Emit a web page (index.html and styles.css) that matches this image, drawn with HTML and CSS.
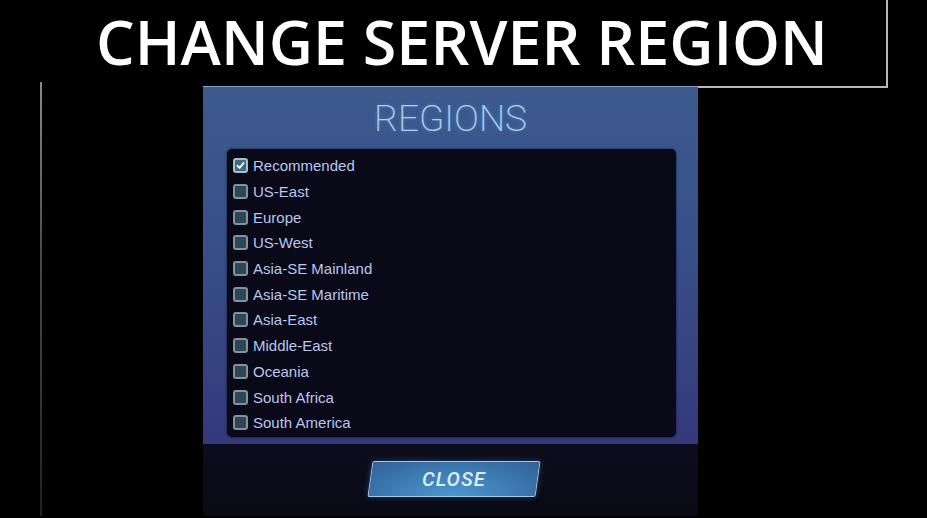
FILE: index.html
```html
<!DOCTYPE html>
<html lang="en">
<head>
  <meta charset="UTF-8">
  <meta name="viewport" content="width=device-width, initial-scale=1">
  <title>Change Server Region</title>
  <link rel="stylesheet" href="styles.css">
</head>
<body>

<div class="header">
  <h1>CHANGE SERVER REGION</h1>
</div>

<div class="stage">
  <div class="side-line"></div>

  <div class="panel">
    <h2>REGIONS</h2>

    <div class="region-list">
      <label class="region"><span class="box checked"><svg viewBox="0 0 14 14"><path d="M3.2 7.4 L5.9 10 L10.9 3.8" /></svg></span>Recommended</label>
      <label class="region"><span class="box"></span>US-East</label>
      <label class="region"><span class="box"></span>Europe</label>
      <label class="region"><span class="box"></span>US-West</label>
      <label class="region"><span class="box"></span>Asia-SE Mainland</label>
      <label class="region"><span class="box"></span>Asia-SE Maritime</label>
      <label class="region"><span class="box"></span>Asia-East</label>
      <label class="region"><span class="box"></span>Middle-East</label>
      <label class="region"><span class="box"></span>Oceania</label>
      <label class="region"><span class="box"></span>South Africa</label>
      <label class="region"><span class="box"></span>South America</label>
    </div>

    <div class="footer">
      <button class="close-btn"><span>CLOSE</span></button>
    </div>
  </div>
</div>

</body>
</html>
```

FILE: styles.css
```css
* { margin: 0; padding: 0; box-sizing: border-box; }
body, html { width: 927px; height: 518px; overflow: hidden; background: #000; }

/* Title strip */
.header { position: relative; width: 888px; height: 88px; border-right: 2px solid #b8b8b8; display: flex; justify-content: center; align-items: center; padding-left: 38px; }
.header::after { content: ""; position: absolute; left: 698px; right: -2px; bottom: 0; height: 2px; background: #b8b8b8; }
.header h1 { font-family: 'Open Sans', sans-serif; font-weight: 600; font-size: 61px; color: #fff; line-height: 1; margin-top: -5px; }

.stage { display: flex; height: 430px; margin-top: -2px; }
.side-line { width: 2px; margin-left: 40px; margin-top: -4px; background: linear-gradient(#8a8a8a, #4a4a4a 40%, #222); }

/* Regions panel */
.panel { width: 495px; margin-left: 161px; display: flex; flex-direction: column; background: linear-gradient(#3c5a8e, #38508a 35%, #35407f 70%, #342e78); border-top: 1px solid #8aa0c0; }
.panel h2 { height: 62px; text-align: center; font-family: 'Roboto', sans-serif; font-weight: 200; font-size: 37px; color: #a8d2f2; line-height: 64px; text-shadow: 0 0 4px rgba(140,200,255,0.35); }

.region-list { margin: 0 22px 7px 24px; height: 288px; padding: 4px 6px 3px; background: #090917; border-radius: 5px; box-shadow: 0 0 3px rgba(0,0,0,0.6); }
.region { display: flex; align-items: center; height: 25.7px; font-family: 'Liberation Sans', Arial, sans-serif; font-size: 15px; color: #bac6ee; }
.region .box { width: 15px; height: 15px; margin-right: 5px; border: 2px solid #83929c; border-radius: 3px; background: #2d4655; display: flex; align-items: center; justify-content: center; }
.region .box.checked { background: #3f6c84; border-color: #a9bfd0; }
.region .box svg { width: 13px; height: 13px; }
.region .box path { fill: none; stroke: #fff; stroke-width: 2.4; stroke-linecap: round; stroke-linejoin: round; }

/* Close button strip */
.footer { flex: 1; display: flex; justify-content: center; padding-top: 17px; background: linear-gradient(#0d0c1c, #0a0a16); }
.close-btn { width: 168px; height: 36px; margin-left: 6px; transform: skewX(-8deg); border: 1px solid #a6c8e2; border-radius: 2px; background: radial-gradient(ellipse at 50% 100%, #4e96cf, #3b77ae 60%, #30609a); box-shadow: 0 0 6px rgba(90,160,230,0.35); cursor: pointer; }
.close-btn span { display: inline-block; transform: skewX(8deg); font-family: 'Roboto', sans-serif; font-style: italic; font-weight: 500; font-size: 20px; letter-spacing: 1px; color: #dcedf8; }
```
